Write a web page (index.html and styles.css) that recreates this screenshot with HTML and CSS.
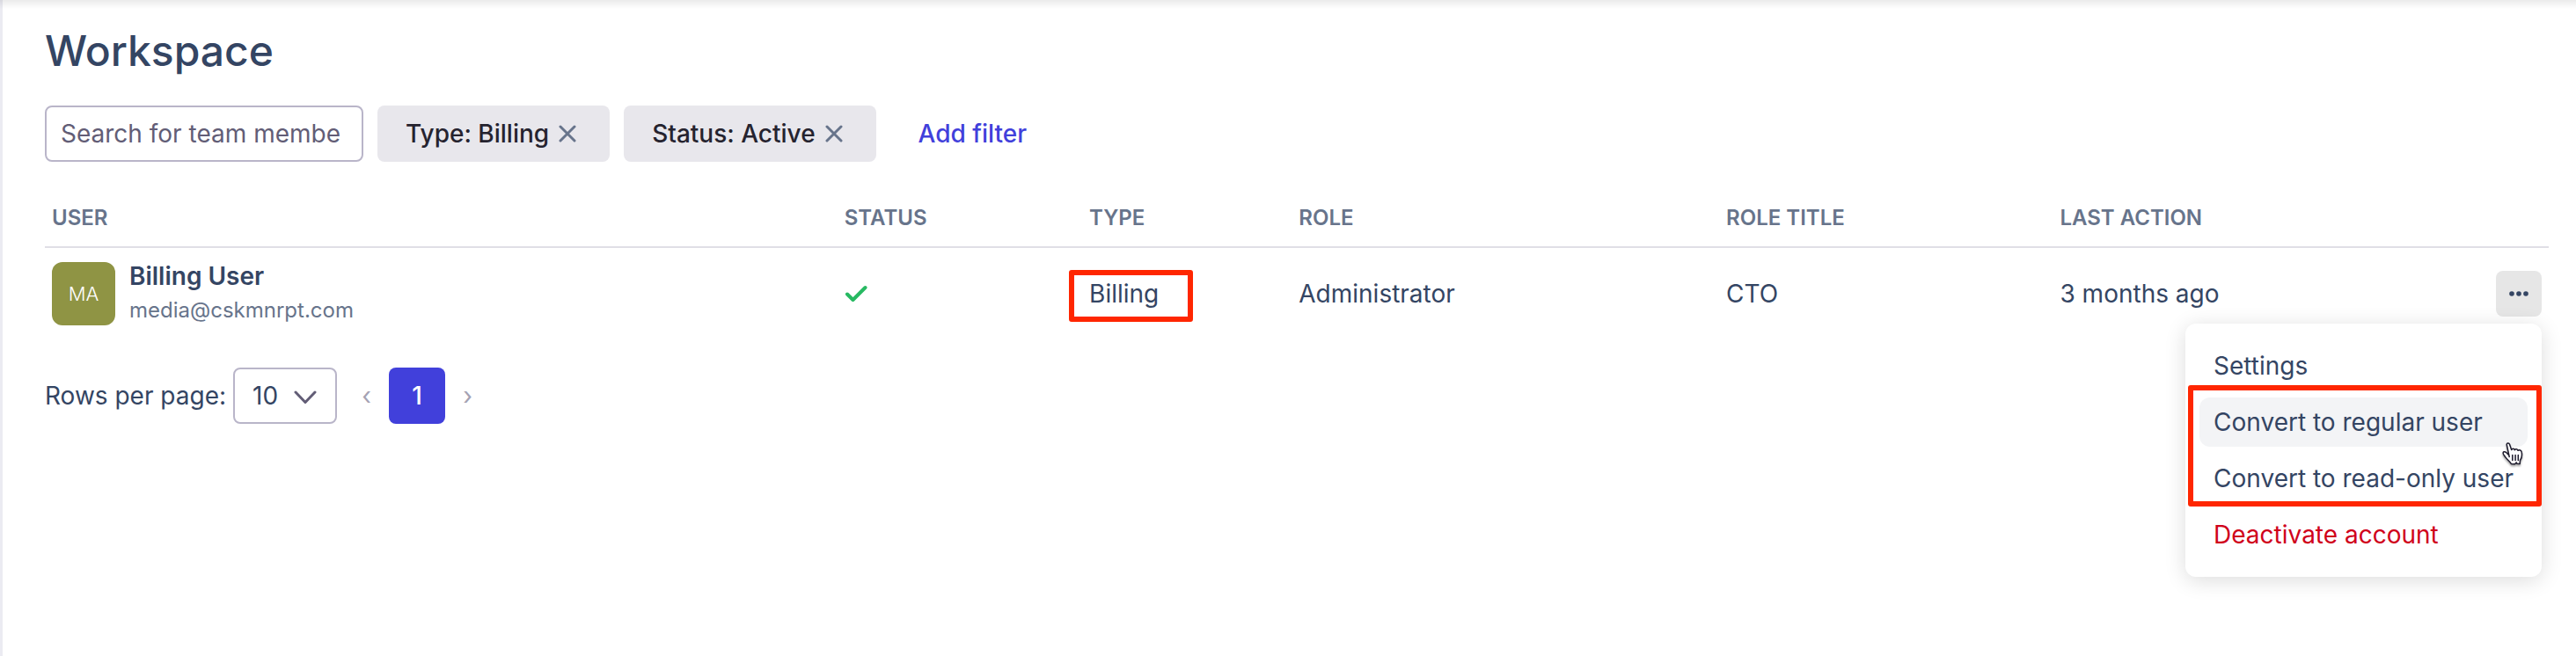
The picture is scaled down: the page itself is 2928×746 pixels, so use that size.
FILE: index.html
```html
<!DOCTYPE html>
<html lang="en">
<head>
<meta charset="utf-8">
<title>Workspace</title>
<link rel="stylesheet" href="styles.css">
</head>
<body>
<main class="page">
  <h1 class="title">Workspace</h1>
  <div class="filters">
    <input class="search" type="text" placeholder="Search for team members" aria-label="Search for team members">
    <button class="chip" type="button">Type: Billing
      <svg class="chip-x" viewBox="0 0 20 20" aria-hidden="true"><path d="M2 2L18 18M18 2L2 18"/></svg>
    </button>
    <button class="chip" type="button">Status: Active
      <svg class="chip-x" viewBox="0 0 20 20" aria-hidden="true"><path d="M2 2L18 18M18 2L2 18"/></svg>
    </button>
    <button class="add-filter" type="button">Add filter</button>
  </div>

  <table class="users">
    <colgroup>
      <col class="col-user"><col class="col-status"><col class="col-type"><col class="col-role"><col class="col-title"><col>
      <col class="col-actions">
    </colgroup>
    <thead>
      <tr><th>USER</th><th>STATUS</th><th>TYPE</th><th>ROLE</th><th>ROLE TITLE</th><th>LAST ACTION</th><th></th></tr>
    </thead>
    <tbody>
      <tr>
        <td>
          <div class="user">
            <span class="avatar">MA</span>
            <div>
              <div class="user-name">Billing User</div>
              <div class="user-email">media@cskmnrpt.com</div>
            </div>
          </div>
        </td>
        <td><svg class="check" viewBox="0 0 26 20" role="img" aria-label="Active"><path d="M3 10.500L9.500 17L23.500 3"/></svg></td>
        <td><span class="type">Billing<span class="mark mark-type"></span></span></td>
        <td>Administrator</td>
        <td>CTO</td>
        <td>3 months ago</td>
        <td>
          <div class="actions">
            <button class="more" type="button" aria-label="More actions">
              <svg viewBox="0 0 22 6" aria-hidden="true"><circle cx="3" cy="3" r="2.800"/><circle cx="11" cy="3" r="2.800"/><circle cx="19" cy="3" r="2.800"/></svg>
            </button>
            <div class="menu">
              <button class="menu-item" type="button">Settings</button>
              <div class="menu-group">
                <button class="menu-item menu-item-hover" type="button">Convert to regular user</button>
                <button class="menu-item" type="button">Convert to read-only user</button>
                <span class="mark mark-menu"></span>
                <svg class="cursor" viewBox="0 0 24 27" aria-hidden="true">
                  <path d="M8.200 16.500L5.300 2.800C4.900 .8 7.800 .2 8.500 2.200L10.700 8.600C11.500 6.700 13.700 6.900 14.300 8.700C15.300 7.200 17.500 7.600 18 9.300C19.600 8.200 21.800 9 22.200 11.200C22.900 14.600 22.700 17.500 20.500 20.500L20.200 24.500L17 24.300L16.200 23L14.500 24.800L10.500 24.600C8.500 21.500 5.500 19.500 4 17.200C3 15.500 1.600 14.400 1.200 12.600C.8 10.800 2.800 10 4.400 11.300L7.300 14.300"/>
                  <path d="M11.800 14.500V20.500M15.100 14.500V20.500M18.300 14.500V20.500"/>
                </svg>
              </div>
              <button class="menu-item menu-item-danger" type="button">Deactivate account</button>
            </div>
          </div>
        </td>
      </tr>
    </tbody>
  </table>

  <div class="pager">
    <label for="rows">Rows per page:</label>
    <div class="select-wrap">
      <select id="rows" class="select"><option>10</option></select>
      <svg class="chevron" viewBox="0 0 26 16" aria-hidden="true"><path d="M2 2L13 13.500L24 2"/></svg>
    </div>
    <nav class="pages" aria-label="Pages">
      <button class="step" type="button" aria-label="Previous page">‹</button>
      <button class="current" type="button">1</button>
      <button class="step" type="button" aria-label="Next page">›</button>
    </nav>
  </div>
</main>
</body>
</html>
```

FILE: styles.css
```css
* { box-sizing: border-box; }

body {
  margin: 0;
  background: #fff;
  color: #344563;
  font: 400 28px/36px Inter, "Liberation Sans", sans-serif;
}

button, input, select {
  margin: 0;
  padding: 0;
  border: 0;
  background: none;
  color: inherit;
  font: inherit;
}

svg { fill: none; stroke-linecap: round; stroke-linejoin: round; }

.page {
  position: relative;
  min-height: 100vh;
  padding: 24px 31px 24px 48px;
  border-left: 3px solid #ebebf2;
}

.page::before {
  content: "";
  position: absolute;
  inset: 0 0 auto -3px;
  height: 10px;
  background: linear-gradient(rgba(0, 0, 0, .08), rgba(0, 0, 0, 0));
}

.title {
  margin: 0 0 28px;
  font-size: 48px;
  font-weight: 500;
  line-height: 68px;
}

.filters { display: flex; gap: 16px; align-items: center; height: 64px; }

.search {
  width: 362px;
  height: 64px;
  padding: 0 24px 0 16px;
  border: 2px solid #b9b5c9;
  border-radius: 8px;
}

.search::placeholder { color: #625d76; opacity: 1; }

.chip {
  display: flex;
  align-items: center;
  gap: 11px;
  height: 64px;
  padding: 0 38px 0 32px;
  border-radius: 8px;
  background: #e8e7ec;
  color: #25232f;
  font-weight: 500;
}

.chip-x { width: 20px; height: 20px; stroke: #67748b; stroke-width: 3; }

.add-filter { padding: 0 32px; color: #4140db; font-weight: 500; }

.users {
  width: 100%;
  margin-top: 48px;
  border-collapse: separate;
  border-spacing: 0;
  table-layout: fixed;
}

.col-user { width: 31.65%; }
.col-status { width: 9.78%; }
.col-type { width: 8.37%; }
.col-role { width: 17.07%; }
.col-title { width: 13.33%; }
.col-actions { width: 68px; }

th {
  padding: 0 8px 16px;
  border-bottom: 2px solid #e0dfe6;
  color: #67748b;
  font-size: 24px;
  font-weight: 600;
  line-height: 32px;
  text-align: left;
}

td { height: 104px; padding: 0 8px; }

.user { display: flex; align-items: center; gap: 16px; }

.avatar {
  display: flex;
  align-items: center;
  justify-content: center;
  width: 72px;
  height: 72px;
  border-radius: 12px;
  background: #8f9444;
  color: #fff;
  font-size: 22px;
  font-weight: 300;
}

.user-name { font-weight: 600; line-height: 38px; }
.user-email { color: #67748b; font-size: 24px; line-height: 40px; }

.check { display: block; width: 26px; height: 20px; stroke: #27b962; stroke-width: 4; }

.type { position: relative; display: inline-block; }

.mark {
  position: absolute;
  border: 6px solid #ff2600;
  border-radius: 3px;
  pointer-events: none;
}

.mark-type { inset: -9px -39px -14px -23px; }
.mark-menu { inset: -14px -16px -4px -13px; }

.actions { position: relative; display: flex; justify-content: flex-end; }

.more {
  display: flex;
  align-items: center;
  justify-content: center;
  width: 52px;
  height: 52px;
  border-radius: 8px;
  background: #e6e6e6;
}

.more svg { width: 22px; height: 6px; fill: #344563; }

.menu {
  position: absolute;
  top: calc(100% + 8px);
  right: 0;
  display: flex;
  flex-direction: column;
  gap: 8px;
  padding: 20px 16px;
  border-radius: 12px;
  background: #fff;
  box-shadow: 0 4px 24px rgba(0, 0, 0, .14);
}

.menu-group { position: relative; display: flex; flex-direction: column; gap: 8px; }

.menu-item {
  height: 56px;
  padding: 0 16px;
  border-radius: 12px;
  text-align: left;
  white-space: nowrap;
}

.menu-item-hover { background: #f3f4f6; }
.menu-item-danger { color: #d0021b; }

.cursor {
  position: absolute;
  top: 51px;
  right: 5px;
  width: 24px;
  height: 27px;
  fill: #fff;
  stroke: #1d1b2c;
  stroke-width: 1.500;
  filter: drop-shadow(0 2px 1px rgba(0, 0, 0, .35));
}

.pager { display: flex; align-items: center; gap: 8px; margin-top: 32px; }

.select-wrap { position: relative; }

.select {
  appearance: none;
  display: block;
  width: 118px;
  height: 64px;
  padding: 0 48px 0 20px;
  border: 2px solid #b9b5c9;
  border-radius: 8px;
}

.chevron {
  position: absolute;
  top: 26px;
  right: 23px;
  width: 26px;
  height: 16px;
  stroke: #625d76;
  stroke-width: 3;
  pointer-events: none;
}

.pages { display: flex; align-items: center; }

.step { width: 51px; height: 64px; color: #a5a2b3; }

.current {
  width: 64px;
  height: 64px;
  border-radius: 8px;
  background: #4140db;
  color: #fff;
  font-weight: 500;
}
```
